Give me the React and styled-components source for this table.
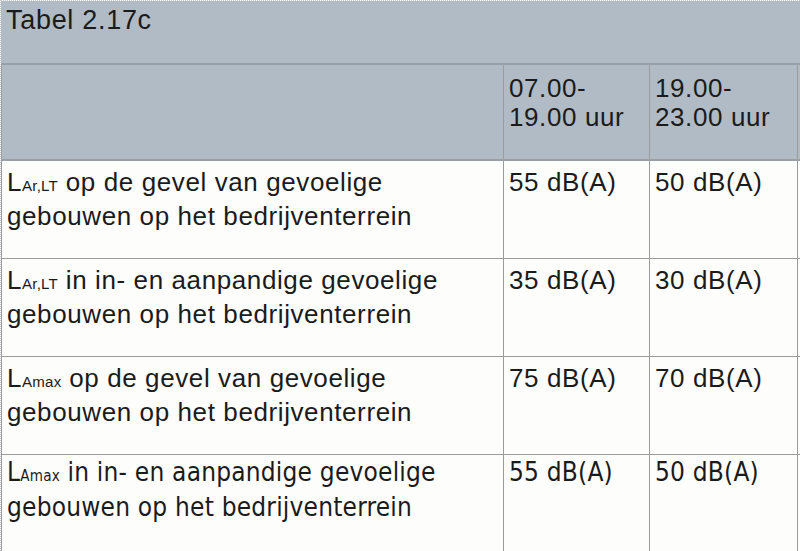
import React from "react";
import styled, { createGlobalStyle } from "styled-components";

const GlobalStyle = createGlobalStyle`
  html, body {
    margin: 0;
    padding: 0;
    background: #fdfdfb;
    overflow: hidden;
  }
`;

const Frame = styled.div`
  width: 800px;
  height: 551px;
  overflow: hidden;
  box-sizing: border-box;
  border-top: 1px dotted #c8cdd2;
  border-left: 1px dotted #c8cdd2;
  font-family: "Liberation Sans", Arial, sans-serif;
  color: #1b1b1b;
`;

const Caption = styled.div`
  height: 64px;
  box-sizing: border-box;
  background: #b0bbc5;
  padding: 2px 5px;
  font-size: 27px;
  line-height: 34px;
  letter-spacing: 0.7px;
  border-bottom: 2px solid #98a0a8;
`;

const Table = styled.table`
  border-collapse: collapse;
  table-layout: fixed;
  width: 1000px;
  font-size: 26px;
  line-height: 31px;
  letter-spacing: 0.6px;
`;

const HeadRow = styled.tr`
  height: 95px;
  background: #b0bbc5;
  border-bottom: 2px solid #9aa0a6;
`;

const Row = styled.tr`
  height: 98px;
  background: #fdfdfb;
  font-family: ${p =>
    p.narrow
      ? '"DejaVu Sans Condensed", "Liberation Sans", sans-serif'
      : '"Liberation Sans", Arial, sans-serif'};
  font-size: ${p => (p.narrow ? "26px" : "26px")};
  letter-spacing: ${p => (p.narrow ? "0.2px" : "0.6px")};
`;

const Cell = styled.td`
  vertical-align: top;
  padding: ${p => (p.tight ? "2px" : "6px")} 5px 0 5px;
  border-left: 1px solid #9b9b9b;
  border-right: 1px solid #9b9b9b;
  border-bottom: 1px solid #9b9b9b;
  overflow: hidden;
  white-space: ${p => (p.nowrap ? "nowrap" : "normal")};
`;

const HeadCell = styled(Cell)`
  padding-top: 9px;
  line-height: 29px;
  border-bottom: none;
`;

const Sub = styled.span`
  font-size: 0.58em;
  letter-spacing: 0.2px;
`;

const Level = ({ sub }) => (
  <>
    L<Sub>{sub}</Sub>
  </>
);

const rows = [
  { sub: "Ar,LT", text: " op de gevel van gevoelige gebouwen op het bedrijventerrein", day: "55 dB(A)", eve: "50 dB(A)" },
  { sub: "Ar,LT", text: " in in- en aanpandige gevoelige gebouwen op het bedrijventerrein", day: "35 dB(A)", eve: "30 dB(A)" },
  { sub: "Amax", text: " op de gevel van gevoelige gebouwen op het bedrijventerrein", day: "75 dB(A)", eve: "70 dB(A)" },
  { sub: "Amax", text: " in in- en aanpandige gevoelige gebouwen op het bedrijventerrein", day: "55 dB(A)", eve: "50 dB(A)", narrow: true },
];

const App = () => (
  <Frame>
    <GlobalStyle />
    <Caption>Tabel 2.17c</Caption>
    <Table>
      <colgroup>
        <col style={{ width: 502 }} />
        <col style={{ width: 146 }} />
        <col style={{ width: 148 }} />
        <col />
      </colgroup>
      <thead>
        <HeadRow>
          <HeadCell />
          <HeadCell>07.00-<br />19.00 uur</HeadCell>
          <HeadCell>19.00-<br />23.00 uur</HeadCell>
          <HeadCell />
        </HeadRow>
      </thead>
      <tbody>
        {rows.map((r, i) => (
          <Row key={i} narrow={r.narrow}>
            <Cell tight={r.narrow}>
              <Level sub={r.sub} />
              {r.text}
            </Cell>
            <Cell tight={r.narrow} nowrap>{r.day}</Cell>
            <Cell tight={r.narrow} nowrap>{r.eve}</Cell>
            <Cell />
          </Row>
        ))}
      </tbody>
    </Table>
  </Frame>
);

export default App;
